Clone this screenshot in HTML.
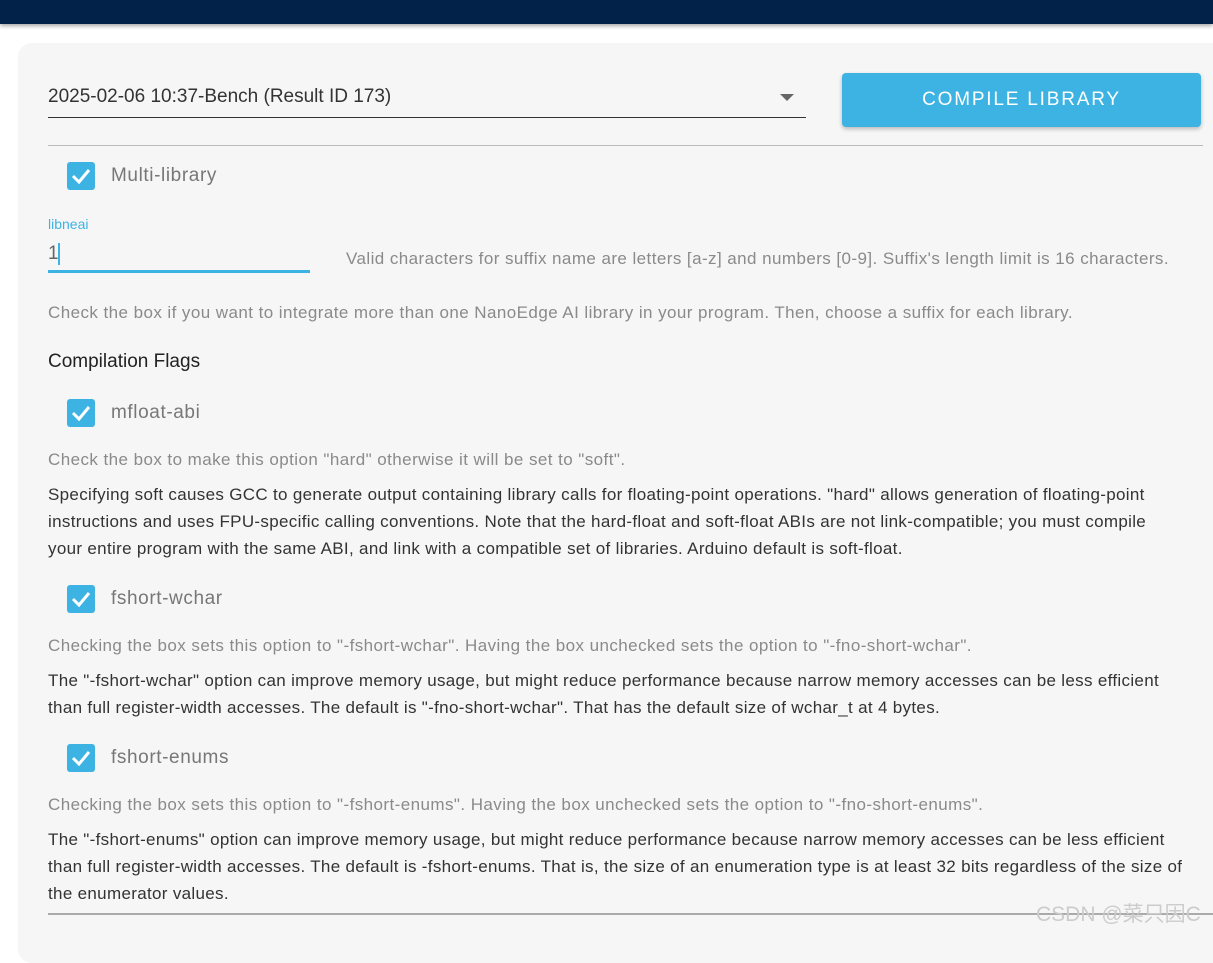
<!DOCTYPE html>
<html><head><style>
body{margin:0;width:1213px;height:931px;overflow:hidden;background:#fff;font-family:"Liberation Sans",sans-serif;position:relative}
.bar{position:absolute;left:0;top:0;width:1213px;height:24px;background:#022249;box-shadow:0 2px 4px rgba(0,0,0,.35)}
.card{position:absolute;left:18px;top:43px;width:1230px;height:920px;background:#f6f6f6;border-radius:14px}
.a{position:absolute;white-space:nowrap}
.cb{position:absolute;left:67px;width:28px;height:28px;background:#3db3e3;border-radius:3px}
.cb svg{position:absolute;left:0;top:0}
.lbl{position:absolute;left:111px;font-size:19px;color:#777;line-height:28px;letter-spacing:0.6px}
.g{color:#8a8a8a;font-size:17px;letter-spacing:0.43px}
.d{color:#333;font-size:17px;line-height:27px;letter-spacing:0.32px}
</style></head><body>
<div class="bar"></div>
<div class="card"></div>
<div class="a" style="left:48px;top:86px;font-size:19px;color:#333">2025-02-06 10:37-Bench (Result ID 173)</div>
<div class="a" style="left:780px;top:94px;width:0;height:0;border-left:7px solid transparent;border-right:7px solid transparent;border-top:7px solid #666"></div>
<div class="a" style="left:48px;top:117px;width:758px;height:1px;background:#333"></div>
<div class="a" style="left:842px;top:73px;width:359px;height:54px;background:#3db3e3;border-radius:4px;box-shadow:0 2px 4px rgba(0,0,0,.25);color:#fff;font-size:19px;letter-spacing:1.8px;text-align:center;line-height:54px">COMPILE LIBRARY</div>
<div class="a" style="left:48px;top:145px;width:1155px;height:1px;background:#bbb"></div>
<div class="cb" style="top:162px"><svg width="28" height="28"><path d="M6 14l6 6 10-12" stroke="#fff" stroke-width="3" fill="none"/></svg></div>
<div class="lbl" style="top:162px">Multi-library</div>
<div class="a" style="left:48px;top:216px;font-size:14px;color:#3db3e3">libneai</div>
<div class="a" style="left:48px;top:243px;font-size:19px;color:#666">1</div>
<div class="a" style="left:58px;top:243px;width:2px;height:22px;background:#3db3e3"></div>
<div class="a" style="left:48px;top:270px;width:262px;height:3px;background:#3db3e3"></div>
<div class="a g" style="left:346px;top:249px">Valid characters for suffix name are letters [a-z] and numbers [0-9]. Suffix's length limit is 16 characters.</div>
<div class="a g" style="left:48px;top:303px">Check the box if you want to integrate more than one NanoEdge AI library in your program. Then, choose a suffix for each library.</div>
<div class="a" style="left:48px;top:351px;font-size:19px;color:#222">Compilation Flags</div>
<div class="cb" style="top:399px"><svg width="28" height="28"><path d="M6 14l6 6 10-12" stroke="#fff" stroke-width="3" fill="none"/></svg></div>
<div class="lbl" style="top:399px">mfloat-abi</div>
<div class="a g" style="left:48px;top:450px">Check the box to make this option "hard" otherwise it will be set to "soft".</div>
<div class="a d" style="left:48px;top:481px">Specifying soft causes GCC to generate output containing library calls for floating-point operations. "hard" allows generation of floating-point<br>instructions and uses FPU-specific calling conventions. Note that the hard-float and soft-float ABIs are not link-compatible; you must compile<br>your entire program with the same ABI, and link with a compatible set of libraries. Arduino default is soft-float.</div>
<div class="cb" style="top:585px"><svg width="28" height="28"><path d="M6 14l6 6 10-12" stroke="#fff" stroke-width="3" fill="none"/></svg></div>
<div class="lbl" style="top:585px">fshort-wchar</div>
<div class="a g" style="left:48px;top:636px">Checking the box sets this option to "-fshort-wchar". Having the box unchecked sets the option to "-fno-short-wchar".</div>
<div class="a d" style="left:48px;top:667px">The "-fshort-wchar" option can improve memory usage, but might reduce performance because narrow memory accesses can be less efficient<br>than full register-width accesses. The default is "-fno-short-wchar". That has the default size of wchar_t at 4 bytes.</div>
<div class="cb" style="top:744px"><svg width="28" height="28"><path d="M6 14l6 6 10-12" stroke="#fff" stroke-width="3" fill="none"/></svg></div>
<div class="lbl" style="top:744px">fshort-enums</div>
<div class="a g" style="left:48px;top:795px">Checking the box sets this option to "-fshort-enums". Having the box unchecked sets the option to "-fno-short-enums".</div>
<div class="a d" style="left:48px;top:826px">The "-fshort-enums" option can improve memory usage, but might reduce performance because narrow memory accesses can be less efficient<br>than full register-width accesses. The default is -fshort-enums. That is, the size of an enumeration type is at least 32 bits regardless of the size of<br>the enumerator values.</div>
<div class="a" style="left:48px;top:913px;width:1165px;height:2px;background:#aaa"></div>
<div class="a" style="left:1036px;top:898px;font-size:21px;color:#ccc;font-family:'Liberation Sans','Noto Sans CJK SC',sans-serif">CSDN @菜只因C</div>
</body></html>
